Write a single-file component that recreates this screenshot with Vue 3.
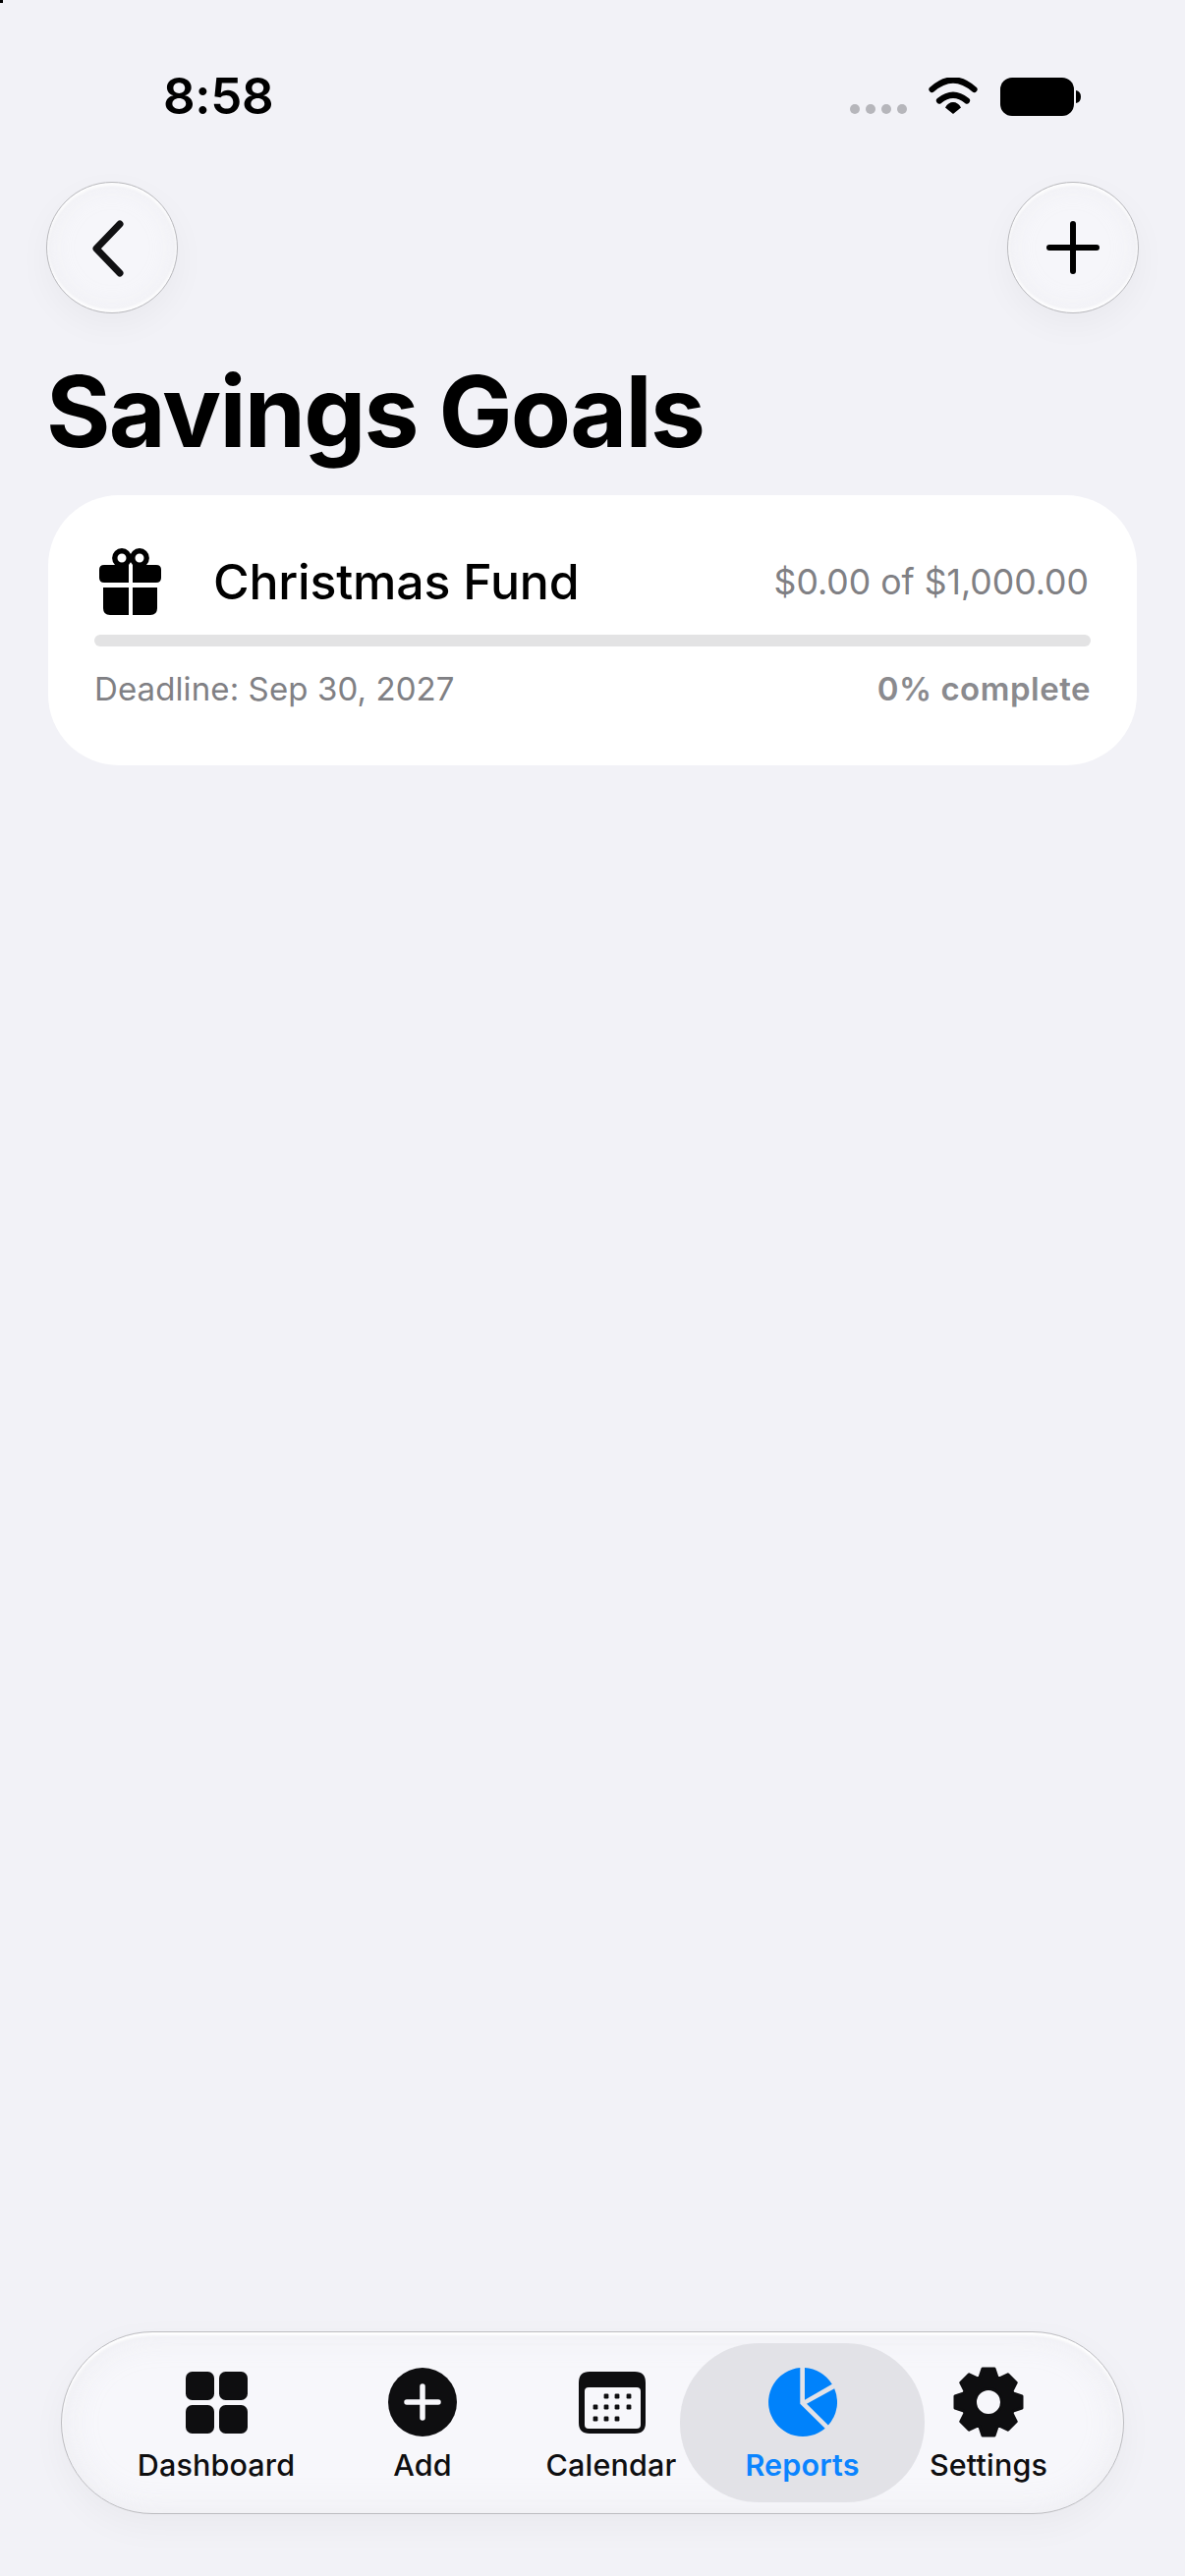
<script setup>
const tabs = [
  { key: 'dashboard', label: 'Dashboard' },
  { key: 'add', label: 'Add' },
  { key: 'calendar', label: 'Calendar' },
  { key: 'reports', label: 'Reports', active: true },
  { key: 'settings', label: 'Settings' },
]

// calendar dots: [x, y] inside the 68x63 icon
const calendarDots = [
  [28, 25], [39, 25], [51, 25],
  [17, 36], [28, 36], [39, 36], [51, 36],
  [17, 48], [28, 48], [39, 48],
]

function buildGear() {
  const c = 37
  const pt = (deg, x, y) => {
    const r = (deg * Math.PI) / 180
    return `${(c + x * Math.cos(r) - y * Math.sin(r)).toFixed(2)} ${(c + x * Math.sin(r) + y * Math.cos(r)).toFixed(2)}`
  }
  let d = ''
  for (let i = 0; i < 8; i++) {
    const a = i * 45
    d += `${i ? 'L' : 'M'}${pt(a, -9, -25)} L${pt(a, -6, -34)} L${pt(a, 6, -34)} L${pt(a, 9, -25)} `
  }
  d += 'Z M37 23.5 A13.5 13.5 0 1 0 37 50.5 A13.5 13.5 0 1 0 37 23.5 Z'
  return d
}
const gearPath = buildGear()
</script>

<template>
  <div class="screen">
    <span class="corner-mark"></span>

    <!-- status bar -->
    <div class="status">
      <span class="status__time">8:58</span>
      <div class="status__right">
        <div class="status__dots">
          <i></i><i></i><i></i><i></i>
        </div>
        <svg class="status__wifi" width="50" height="37" viewBox="0 0 50 37">
          <path d="M3.5 12Q25 -7 46.5 12" fill="none" stroke="#000" stroke-width="6.2" stroke-linecap="round" />
          <path d="M11 23.5Q25 12 39 23.5" fill="none" stroke="#000" stroke-width="6.2" stroke-linecap="round" />
          <path d="M25 25Q30 25 33 30.5L25 37L17 30.5Q20 25 25 25Z" fill="#000" />
        </svg>
        <svg class="status__battery" width="82" height="39" viewBox="0 0 82 39">
          <rect x="0" y="0" width="75" height="39" rx="12" fill="#000" />
          <path d="M77 13Q82 14 82 19.5Q82 25 77 26Z" fill="#000" />
        </svg>
      </div>
    </div>

    <!-- nav -->
    <div class="nav">
      <button class="round-btn" aria-label="Back">
        <svg class="round-btn__back" width="40" height="64" viewBox="0 0 40 64">
          <path d="M32 8L8 33L32 58" fill="none" stroke="#111113" stroke-width="7" stroke-linecap="round" stroke-linejoin="round" />
        </svg>
      </button>
      <button class="round-btn" aria-label="Add goal">
        <svg width="60" height="60" viewBox="0 0 60 60">
          <path d="M30 6V54M6 30H54" fill="none" stroke="#000" stroke-width="6" stroke-linecap="round" />
        </svg>
      </button>
    </div>

    <h1 class="title">Savings Goals</h1>

    <!-- goal card -->
    <section class="card">
      <div class="card__top">
        <svg class="card__gift" width="63" height="68" viewBox="0 0 63 68">
          <circle cx="23" cy="10" r="7.2" fill="none" stroke="#000" stroke-width="5.4" />
          <circle cx="41" cy="10" r="7.2" fill="none" stroke="#000" stroke-width="5.4" />
          <path d="M5 17H30V35H5Q0 35 0 30V22Q0 17 5 17Z" fill="#000" />
          <path d="M34 17H58Q63 17 63 22V30Q63 35 58 35H34Z" fill="#000" />
          <path d="M4 40H30V68H11Q4 68 4 61Z" fill="#000" />
          <path d="M34 40H59V61Q59 68 52 68H34Z" fill="#000" />
        </svg>
        <span class="card__name">Christmas Fund</span>
        <span class="card__amount">$0.00 of $1,000.00</span>
      </div>
      <div class="card__bar"></div>
      <div class="card__bottom">
        <span class="card__deadline">Deadline: Sep 30, 2027</span>
        <span class="card__percent">0% complete</span>
      </div>
    </section>

    <!-- tab bar -->
    <nav class="tabbar">
      <div
        v-for="tab in tabs"
        :key="tab.key"
        class="tab"
        :class="['tab--' + tab.key, { 'tab--active': tab.active }]"
      >
        <div class="tab__icon">
          <svg v-if="tab.key === 'dashboard'" width="63" height="63" viewBox="0 0 63 63" fill="#0e0e10">
            <rect x="0" y="0" width="29" height="29" rx="6.5" />
            <rect x="34" y="0" width="29" height="29" rx="6.5" />
            <rect x="0" y="34" width="29" height="29" rx="6.5" />
            <rect x="34" y="34" width="29" height="29" rx="6.5" />
          </svg>
          <svg v-else-if="tab.key === 'add'" width="70" height="70" viewBox="0 0 70 70">
            <circle cx="35" cy="35" r="35" fill="#0e0e10" />
            <path d="M35 19V51M19 35H51" fill="none" stroke="#f7f7fb" stroke-width="5.5" stroke-linecap="round" />
          </svg>
          <svg v-else-if="tab.key === 'calendar'" width="68" height="63" viewBox="0 0 68 63">
            <path
              fill="#0e0e10"
              fill-rule="evenodd"
              d="M11 0H57Q68 0 68 11V52Q68 63 57 63H11Q0 63 0 52V11Q0 0 11 0ZM10 16Q6 16 6 20V54Q6 58 10 58H59Q63 58 63 54V20Q63 16 59 16Z"
            />
            <rect
              v-for="(dot, i) in calendarDots"
              :key="i"
              :x="dot[0] - 2.4"
              :y="dot[1] - 2.4"
              width="4.8"
              height="4.8"
              rx="1.2"
              fill="#0e0e10"
            />
          </svg>
          <svg v-else-if="tab.key === 'reports'" width="70" height="70" viewBox="0 0 70 70" fill="#0082fb">
            <path d="M32.3 36.7V0.1A35 35 0 1 0 57.7 61.7Z" />
            <path d="M37 32.7V0.06A35 35 0 0 1 64.8 16.8Z" />
            <path d="M39 36.7L67.2 21.3A35 35 0 0 1 60.9 58.6Z" />
          </svg>
          <svg v-else width="74" height="74" viewBox="0 0 74 74">
            <path :d="gearPath" fill="#0e0e10" fill-rule="evenodd" stroke="#0e0e10" stroke-width="3" stroke-linejoin="round" />
          </svg>
        </div>
        <span class="tab__label">{{ tab.label }}</span>
      </div>
    </nav>
  </div>
</template>

<style>
html, body {
  margin: 0;
  background: #f2f2f7;
}
</style>

<style scoped>
.screen {
  position: relative;
  display: flex;
  flex-direction: column;
  height: 2622px;
  background: #f2f2f7;
  font-family: Inter, "Liberation Sans", sans-serif;
  color: #000;
  overflow: hidden;
}

.corner-mark {
  position: absolute;
  top: 0;
  left: 0;
  width: 3px;
  height: 3px;
  background: #000;
}

/* status bar */
.status {
  display: flex;
  justify-content: space-between;
  align-items: flex-start;
  padding: 72px 106px 0 166px;
  height: 46px;
}
.status__time {
  font-size: 51px;
  line-height: 52px;
  font-weight: 600;
  letter-spacing: -0.3px;
}
.status__right {
  display: flex;
  align-items: flex-start;
  margin-top: 7px;
}
.status__dots {
  display: flex;
  gap: 6px;
  margin-top: 27px;
  margin-right: 22px;
}
.status__dots i {
  width: 10px;
  height: 10px;
  border-radius: 50%;
  background: #b6b6bb;
}
.status__wifi {
  margin-right: 23px;
}

/* nav buttons */
.nav {
  display: flex;
  justify-content: space-between;
  padding: 67px 47px 0;
}
.round-btn {
  display: flex;
  align-items: center;
  justify-content: center;
  width: 134px;
  height: 134px;
  padding: 0;
  border: 1.5px solid #b9b9bd;
  border-radius: 50%;
  background: #f6f6fa;
  box-shadow: 0 12px 34px rgba(0, 0, 0, 0.04), inset 0 3px 3px rgba(255, 255, 255, 0.9), inset 0 -3px 3px rgba(255, 255, 255, 0.9), inset 0 0 24px rgba(235, 235, 240, 0.7);
}
.round-btn__back {
  margin-right: 8px;
}

.title {
  margin: 22px 0 7px 47px;
  font-size: 100px;
  line-height: 156px;
  font-weight: 700;
  letter-spacing: -1.8px;
}

/* goal card */
.card {
  display: flex;
  flex-direction: column;
  margin: 0 49px;
  height: 275px;
  box-sizing: border-box;
  padding: 54px 47px 0 47px;
  background: #fff;
  border-radius: 72px;
}
.card__top {
  display: flex;
  align-items: center;
  height: 68px;
}
.card__gift {
  margin-left: 5px;
  flex-shrink: 0;
}
.card__name {
  margin-left: 53px;
  font-size: 50px;
  font-weight: 550;
  letter-spacing: -0.2px;
}
.card__amount {
  margin-left: auto;
  margin-right: 2px;
  font-size: 35.6px;
  color: #808084;
}
.card__bar {
  height: 12px;
  margin-top: 20px;
  border-radius: 6px;
  background: #e3e3e4;
}
.card__bottom {
  display: flex;
  justify-content: space-between;
  margin-top: 23px;
  font-size: 33px;
  line-height: 40px;
}
.card__deadline {
  color: #808084;
  letter-spacing: 0.1px;
}
.card__percent {
  font-weight: 600;
  color: #8a8a8e;
  letter-spacing: 0.5px;
}

/* tab bar */
.tabbar {
  display: grid;
  grid-template-columns: 240px 212px 140px 249px 130px;
  margin: auto 0 63px 62px;
  width: 1082px;
  height: 186px;
  box-sizing: border-box;
  padding: 11px 0 11px 37px;
  border: 1.5px solid #bcbcc0;
  border-radius: 93px;
  background: #f7f7fb;
  box-shadow: 0 12px 36px rgba(0, 0, 0, 0.04), inset 0 3px 3px #fff, inset 0 0 34px rgba(232, 232, 238, 0.8);
}
.tab {
  display: flex;
  flex-direction: column;
  align-items: center;
  padding-top: 23px;
  color: #0e0e10;
}
.tab--add {
  padding-right: 32px;
}
.tab--calendar .tab__icon {
  margin-left: 2px;
}
.tab--active {
  background: #e2e2e7;
  border-radius: 80px;
  color: #0a84ff;
}
.tab__icon {
  display: flex;
  align-items: center;
  justify-content: center;
  height: 74px;
}
.tab__label {
  margin-top: 9px;
  font-size: 30.5px;
  line-height: 36px;
  font-weight: 500;
  letter-spacing: 0.15px;
  white-space: nowrap;
}
.tab--active .tab__label {
  font-weight: 600;
}
</style>
